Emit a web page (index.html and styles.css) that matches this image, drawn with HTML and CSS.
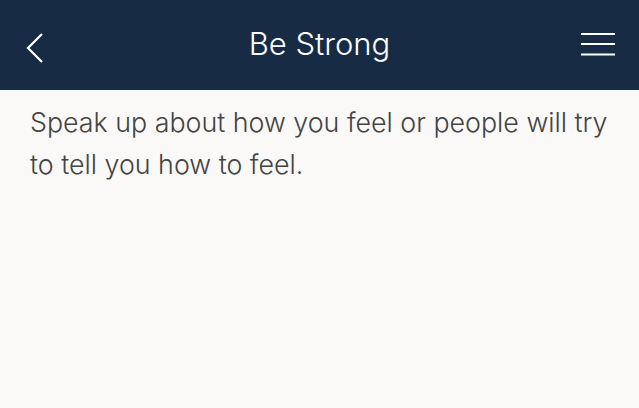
FILE: index.html
```html
<!DOCTYPE html>
<html>
<head>
<meta charset="utf-8">
<link rel="stylesheet" href="styles.css">
</head>
<body>
<header class="bar">
  <button class="icon back" aria-label="Back">
    <svg width="20" height="32" viewBox="0 0 20 32"><polyline points="17,2 3,16 17,30" fill="none" stroke="#fff" stroke-width="2.2"/></svg>
  </button>
  <h1 class="title">Be Strong</h1>
  <button class="icon menu" aria-label="Menu">
    <svg width="34" height="24" viewBox="0 0 34 24"><g stroke="#fff" stroke-width="2.2"><line x1="0" y1="2" x2="34" y2="2"/><line x1="0" y1="12" x2="34" y2="12"/><line x1="0" y1="22.5" x2="34" y2="22.5"/></g></svg>
  </button>
</header>
<main class="content">
  <p class="quote">Speak up about how you feel or people will try to tell you how to feel.</p>
</main>
</body>
</html>
```
FILE: styles.css
```css
html, body {
  margin: 0;
  padding: 0;
  background: #faf9f8;
  width: 639px;
  height: 408px;
  overflow: hidden;
}
.bar {
  height: 90px;
  background: #172b45;
  display: flex;
  align-items: center;
  justify-content: space-between;
  padding: 0 24px 0 25px;
  position: relative;
}
.icon {
  background: none;
  border: 0;
  padding: 0;
  display: flex;
}
.back { margin-top: 6px; }
.menu { margin-top: -2px; }
.title {
  position: absolute;
  left: 0;
  right: 0;
  text-align: center;
  margin: 0;
  font-family: Inter, "Liberation Sans", sans-serif;
  font-weight: 300;
  font-size: 31px;
  color: #fff;
  top: 26px;
  line-height: 36px;
}
.content {
  padding: 11px 10px 0 30px;
}
.quote {
  margin: 0;
  font-family: Inter, "Liberation Sans", sans-serif;
  font-weight: 300;
  font-size: 26.8px;
  line-height: 42px;
  color: #444;
}
```
